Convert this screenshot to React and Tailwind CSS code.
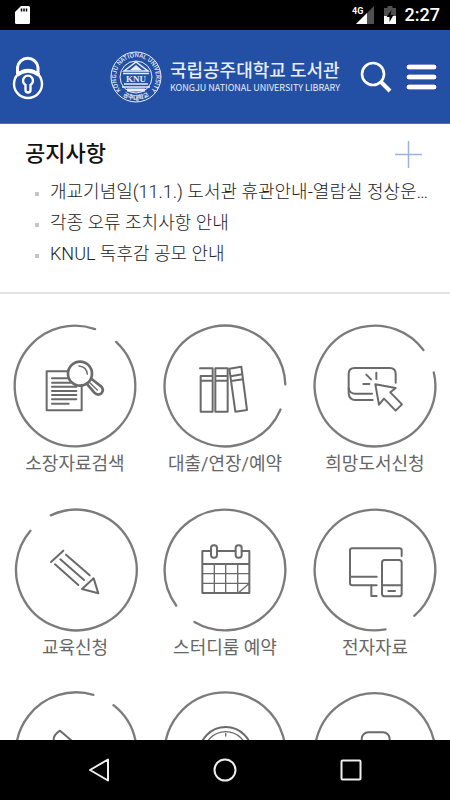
import React from "react";

const notices = [
  "개교기념일(11.1.) 도서관 휴관안내-열람실 정상운영 안내",
  "각종 오류 조치사항 안내",
  "KNUL 독후감 공모 안내",
];

const SearchDocIcon = () => (
  <>
    <path d="M202 184H140V301H245V224" />
    <path d="M156 205H202M156 218H212M156 230H229M156 243H229M156 255H229M156 268H229M156 281H206" />
    <circle cx="240" cy="191" r="36" strokeWidth="8" />
    <path d="M237 168Q261 171 262 193" strokeWidth="4" />
    <path
      d="M260 221L283 248Q293 258 304 250Q313 241 304 230L275 207"
      strokeWidth="8"
    />
    <path d="M267 216L292 240" strokeWidth="4" />
  </>
);

const BooksIcon = () => (
  <>
    <path d="M150 175H188V305H152V198H188M152 212H188" />
    <path d="M196 175H233V305H196ZM196 198H233M196 212H233" />
    <path d="M238 176L274 170L291 300L256 305ZM242 199L277 193M244 213L279 208" />
  </>
);

const RequestIcon = () => (
  <>
    <path d="M287 218V192Q287 174 269 174H164Q146 174 146 192V250Q148 270 166 270H218" />
    <path d="M146 235Q149 251 166 251H216" />
    <path d="M199 194L213 208M229 188V207M190 222H208" />
    <path d="M226 223L287 234L271 247L306 283L287 302L252 266L237 284Z" />
  </>
);

const PencilIcon = () => (
  <>
    <path d="M153 201L190 167" />
    <path d="M198 179L269 241M181 193L252 255M165 208L235 270" />
    <path d="M281 250L295 295L246 282Z" />
  </>
);

const CalendarIcon = () => (
  <>
    <path d="M181 168H157V294H298V168H275M202 168H256M157 207H298" />
    <path
      d="M157 236H298M157 265H298M193 207V294M227 207V294M263 207V294M265 294L298 265"
      strokeWidth="4"
    />
    <rect x="183" y="151" width="18" height="37" rx="8" />
    <rect x="257" y="151" width="18" height="37" rx="8" />
  </>
);

const DevicesIcon = () => (
  <>
    <path d="M305 183V167Q305 160 298 160H157Q150 160 150 167V264Q150 271 157 271H230" />
    <path d="M150 245H230M214 271V303H230" />
    <rect x="246" y="195" width="59" height="109" rx="8" />
    <path d="M246 271H305M265 288H285" />
  </>
);

const PhoneIcon = () => (
  <path d="M161 182Q159 166 180 152L222 188L205 210Q220 245 255 262L275 240L310 270Q295 300 265 298Q175 275 161 182Z" />
);

const ClockIcon = () => (
  <>
    <circle cx="227" cy="220" r="79" />
    <circle cx="227" cy="220" r="65" strokeWidth="4" />
    <path d="M227 160V168M227 190V220H250" strokeWidth="4" />
  </>
);

const CardIcon = () => <rect x="185" y="157" width="84" height="130" rx="20" />;

// start / gap: degrees on the ring, clockwise from 3 o'clock
const menus = [
  { id: "search", label: "소장자료검색", Icon: SearchDocIcon, view: "0 39 450 378", cx: 225, cy: 228, start: -47, gap: 24 },
  { id: "loan", label: "대출/연장/예약", Icon: BooksIcon, view: "0 39 450 378", cx: 225, cy: 228, start: 23, gap: 25 },
  { id: "request", label: "희망도서신청", Icon: RequestIcon, view: "0 39 450 378", cx: 225, cy: 228, start: -13, gap: 24 },
  { id: "education", label: "교육신청", Icon: PencilIcon, view: "0 36 450 378", cx: 229, cy: 225, start: -115, gap: 25 },
  { id: "room", label: "스터디룸 예약", Icon: CalendarIcon, view: "0 36 450 378", cx: 225, cy: 225, start: 144, gap: 24 },
  { id: "digital", label: "전자자료", Icon: DevicesIcon, view: "0 36 450 378", cx: 225, cy: 225, start: 80, gap: 31 },
  { id: "contact", Icon: PhoneIcon, view: "0 33 450 378", cx: 229, cy: 218, start: -52, gap: 22 },
  { id: "hours", Icon: ClockIcon, view: "0 33 450 378", cx: 225, cy: 218, start: 40, gap: 24 },
  { id: "card", Icon: CardIcon, view: "0 33 450 378", cx: 225, cy: 221, start: 60, gap: 24 },
];

const StatusBar = () => (
  <div className="flex h-[30px] shrink-0 items-center justify-between bg-black pl-[15px] pr-[10px] text-white">
    <svg width="15" height="18" viewBox="0 0 15 18">
      <path
        d="M6 0H13.5Q15 0 15 1.5V16.5Q15 18 13.5 18H1.5Q0 18 0 16.5V6Z"
        fill="white"
      />
      <path d="M6.5 2.5V5.5M9 2.5V5.5M11.5 2.5V5.5" stroke="black" strokeWidth="1.5" />
    </svg>
    <div className="flex items-center">
      <svg width="23" height="18" viewBox="0 0 23 18">
        <path d="M22 0V18H4Z" fill="#505050" />
        <path d="M15 7V18H4Z" fill="white" />
        <rect width="12" height="9" fill="black" />
        <text x="0" y="8" fill="white" fontSize="9" fontWeight="700" fontFamily="Roboto, sans-serif">
          4G
        </text>
      </svg>
      <svg width="12" height="18" viewBox="0 0 12 18" className="ml-[9px] mr-[9px]">
        <path d="M3.5 0H8.5V2H12V18H0V2H3.5Z" fill="#505050" />
        <path d="M0 10H12V18H0Z" fill="white" />
        <path d="M7.5 4L2.5 11H5.5V16L9.5 9H6.5Z" fill="black" />
      </svg>
      <span className="font-[Roboto,sans-serif] text-[18px] font-medium leading-[30px]">
        2:27
      </span>
    </div>
  </div>
);

const Seal = () => (
  <svg width="52" height="52" viewBox="0 0 52 52" fill="none" stroke="#e8eefa">
    <circle cx="26" cy="26" r="25" strokeWidth="1" />
    <circle cx="26" cy="26" r="16" strokeWidth="1" />
    <path id="sealTop" d="M12.3 40.7A20 20 0 1 1 39.7 40.7" stroke="none" />
    <path id="sealBottom" d="M10.2 42.6A23 23 0 0 0 41.8 42.6" stroke="none" />
    <g stroke="none" fill="#e8eefa" fontFamily="'Noto Sans CJK KR', sans-serif">
      <text fontSize="6" fontWeight="500">
        <textPath href="#sealTop" startOffset="50%" textAnchor="middle">
          KONGJU NATIONAL UNIVERSITY
        </textPath>
      </text>
      <text fontSize="6" fontWeight="700">
        <textPath href="#sealBottom" startOffset="50%" textAnchor="middle">
          공주대학교
        </textPath>
      </text>
      <text x="26" y="31" fontSize="9" fontWeight="700" textAnchor="middle" fontFamily="'Liberation Serif', serif">
        KNU
      </text>
    </g>
    <path d="M14 20L26 11L38 20Z" strokeWidth="1.5" />
    <path d="M20 19L26 14L32 19Z" fill="#e8eefa" stroke="none" />
    <path d="M13 22.5H39M14 33H38M12 36H40" strokeWidth="1.5" />
    <path d="M17 39H35" strokeWidth="3" />
  </svg>
);

const Header = () => (
  <header className="grid h-[94px] shrink-0 grid-cols-[1fr_auto_1fr] items-center border-b border-[#4a76bb] bg-[#2350a4] px-3 font-['Noto_Sans_CJK_KR',sans-serif] text-[#e8eefa]">
    <button aria-label="로그인" className="justify-self-start">
      <svg width="32" height="46" viewBox="0 0 32 46" fill="none" stroke="white" strokeWidth="3">
        <path d="M5.5 20V13.5A10.3 10.3 0 0 1 26 13.5V20" />
        <circle cx="16" cy="30" r="14" strokeWidth="2.4" />
        <path d="M5 21Q16 13 27 21" strokeWidth="3.5" />
        <path
          d="M13.5 31A5 5 0 1 1 18.5 31V36A2.5 2.5 0 0 1 13.5 36Z"
          strokeWidth="2.4"
        />
      </svg>
    </button>

    <a href="#" className="flex items-center gap-2">
      <Seal />
      <span className="flex flex-col">
        <span className="text-[18px] font-medium leading-[22px]">
          국립공주대학교 도서관
        </span>
        <span className="text-[9px] leading-4">
          KONGJU NATIONAL UNIVERSITY LIBRARY
        </span>
      </span>
    </a>

    <div className="flex items-center gap-[14px] justify-self-end">
      <button aria-label="검색">
        <svg width="32" height="32" viewBox="0 0 32 32" fill="none" stroke="white">
          <circle cx="13" cy="13" r="11" strokeWidth="2.6" />
          <path d="M21 21L30 30" strokeWidth="4" />
        </svg>
      </button>
      <button aria-label="메뉴">
        <svg width="32" height="28" viewBox="0 0 32 28" strokeLinecap="round">
          <path d="M3 4H28M3 14H28M3 24H28" stroke="#0a0aa0" strokeWidth="6" />
          <path d="M3 4H28M3 14H28M3 24H28" stroke="white" strokeWidth="5" />
        </svg>
      </button>
    </div>
  </header>
);

const Notices = () => (
  <section className="border-b-2 border-[#e2e2e2] pb-[23px] pl-[25px] pr-[18px] pt-[14px]">
    <div className="flex items-center justify-between">
      <h2 className="text-[22px] font-medium leading-8 text-[#111]">공지사항</h2>
      <button aria-label="공지사항 더보기" className="pr-[10px]">
        <svg width="27" height="27" viewBox="0 0 27 27" stroke="#9db2da" strokeWidth="1.5">
          <path d="M0 13.5H27M13.5 0V27" />
        </svg>
      </button>
    </div>
    <ul className="mt-1.5">
      {notices.map((notice) => (
        <li key={notice} className="flex h-[31px] items-center pl-[10px]">
          <span className="mt-1 size-1 shrink-0 bg-[#c4c4c4]" />
          <a
            href="#"
            className="ml-[11px] truncate text-[18px] font-light leading-[31px] text-[#222]"
          >
            {notice}
          </a>
        </li>
      ))}
    </ul>
  </section>
);

const MenuItem = ({ label, Icon, view, cx, cy, start, gap }) => (
  <a href="#" className="flex flex-col items-center pb-7 text-[#666]">
    <svg
      width="150"
      height="126"
      viewBox={view}
      fill="none"
      stroke="#6a6a6a"
      strokeWidth="6"
      strokeLinecap="round"
      strokeLinejoin="round"
      className="overflow-visible"
    >
      <circle
        cx={cx}
        cy={cy}
        r="181"
        stroke="#7b7b7b"
        strokeWidth="7"
        pathLength={360}
        strokeDasharray={`${360 - gap} ${gap}`}
        transform={`rotate(${start} ${cx} ${cy})`}
      />
      <Icon />
    </svg>
    {label && <span className="text-[18px] leading-[30px]">{label}</span>}
  </a>
);

const NavBar = () => (
  <nav className="flex h-[60px] shrink-0 items-center bg-black px-[8%]">
    <button aria-label="뒤로" className="flex flex-1 justify-center">
      <svg width="24" height="24" viewBox="0 0 24 24" fill="none" stroke="#eee" strokeWidth="2">
        <path d="M21 1.5V22.5L3 12Z" strokeLinejoin="round" />
      </svg>
    </button>
    <button aria-label="홈" className="flex flex-1 justify-center">
      <svg width="24" height="24" viewBox="0 0 24 24" fill="none" stroke="#eee" strokeWidth="2">
        <circle cx="12" cy="12" r="10.5" />
      </svg>
    </button>
    <button aria-label="최근 앱" className="flex flex-1 justify-center">
      <svg width="24" height="24" viewBox="0 0 24 24" fill="none" stroke="#eee" strokeWidth="2">
        <rect x="2.500" y="2.500" width="19" height="19" rx="1" />
      </svg>
    </button>
  </nav>
);

const App = () => {
  return (
    <div className="flex h-screen flex-col bg-white font-[Roboto,'Noto_Sans_CJK_KR',sans-serif]">
      <StatusBar />
      <Header />
      <main className="min-h-0 flex-1 overflow-hidden">
        <Notices />
        {/* Main menu */}
        <div className="grid grid-cols-3 pt-[29px]">
          {menus.map((menu) => (
            <MenuItem key={menu.id} {...menu} />
          ))}
        </div>
      </main>
      <NavBar />
    </div>
  );
};

export default App;
